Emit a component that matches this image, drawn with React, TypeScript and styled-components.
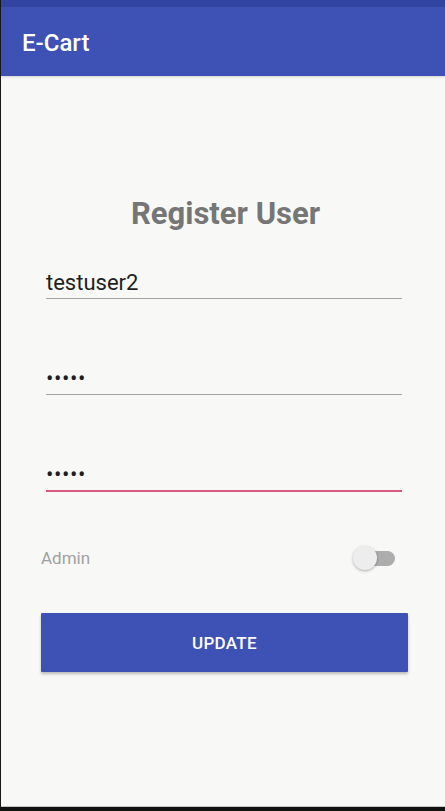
import React from "react";
import styled, { createGlobalStyle } from "styled-components";

const Global = createGlobalStyle`
  html, body { margin: 0; padding: 0; }
  body { font-family: Roboto, "Noto Sans", Arial, sans-serif; background: #111; }
  * { box-sizing: border-box; }
`;

const Frame = styled.div`
  width: 445px;
  height: 811px;
  display: flex;
  flex-direction: column;
  border-left: 1px solid #1a1a1a;
  border-bottom: 4px solid #111;
  background: #f8f9f7;
  overflow: hidden;
`;

const StatusBar = styled.div`
  height: 7px;
  background: #3343a1;
  flex: none;
`;

const Toolbar = styled.header`
  height: 69px;
  flex: none;
  display: flex;
  align-items: center;
  padding: 2px 0 0 21px;
  background: #3e51b5;
  box-shadow: 0 1px 2px rgba(0, 0, 0, 0.15);
`;

const AppTitle = styled.h1`
  margin: 0;
  font-size: 24px;
  line-height: 28px;
  font-weight: 500;
  color: #fff;
`;

const Content = styled.main`
  flex: 1;
  display: flex;
  flex-direction: column;
  padding: 120px 37px 0 40px;
  border-bottom: 1px solid #c4c4c4;
`;

const Heading = styled.h2`
  margin: 0;
  text-align: center;
  font-size: 31px;
  line-height: 36px;
  font-weight: 700;
  color: #767676;
  padding-left: 2px;
`;

const Field = styled.div<{ $focused?: boolean; $gap: number }>`
  margin: ${(p) => p.$gap}px 6px 0 5px;
  display: flex;
  align-items: flex-end;
  height: ${(p) => (p.$focused ? 32 : 31)}px;
  border-bottom: ${(p) => (p.$focused ? "2px solid #d65a86" : "1px solid #a3a3a3")};
`;

const Value = styled.span`
  font-size: 22px;
  line-height: 30px;
  color: #1f1f1f;
`;

const Dots = styled.span`
  font-size: 22px;
  line-height: 30px;
  color: #1f1f1f;
  letter-spacing: 0.6px;
`;

const Row = styled.div`
  margin: 54px 13px 0 0;
  height: 24px;
  display: flex;
  align-items: center;
  justify-content: space-between;
`;

const Label = styled.span`
  font-size: 17px;
  line-height: 24px;
  color: #a1a1a1;
`;

const Switch = styled.span`
  position: relative;
  width: 42px;
  height: 24px;
  display: block;
`;

const Track = styled.span`
  position: absolute;
  left: 6px;
  right: 0;
  top: 5px;
  height: 15px;
  border-radius: 8px;
  background: #adadad;
`;

const Thumb = styled.span`
  position: absolute;
  left: 0;
  top: 0;
  width: 24px;
  height: 24px;
  border-radius: 50%;
  background: #ededed;
  box-shadow: 0 1px 3px rgba(0, 0, 0, 0.3);
`;

const Button = styled.button`
  margin-top: 43px;
  height: 59px;
  border: none;
  border-radius: 1px;
  background: #3e51b5;
  color: #fff;
  font-family: inherit;
  font-size: 17px;
  font-weight: 500;
  letter-spacing: 0.3px;
  box-shadow: 0 2px 3px rgba(0, 0, 0, 0.25);
`;

export default function App() {
  return (
    <>
      <Global />
      <Frame>
        <StatusBar />
        <Toolbar>
          <AppTitle>E-Cart</AppTitle>
        </Toolbar>
        <Content>
          <Heading>Register User</Heading>
          <Field $gap={36}>
            <Value>testuser2</Value>
          </Field>
          <Field $gap={65}>
            <Dots>•••••</Dots>
          </Field>
          <Field $gap={65} $focused>
            <Dots>•••••</Dots>
          </Field>
          <Row>
            <Label>Admin</Label>
            <Switch>
              <Track />
              <Thumb />
            </Switch>
          </Row>
          <Button>UPDATE</Button>
        </Content>
      </Frame>
    </>
  );
}
